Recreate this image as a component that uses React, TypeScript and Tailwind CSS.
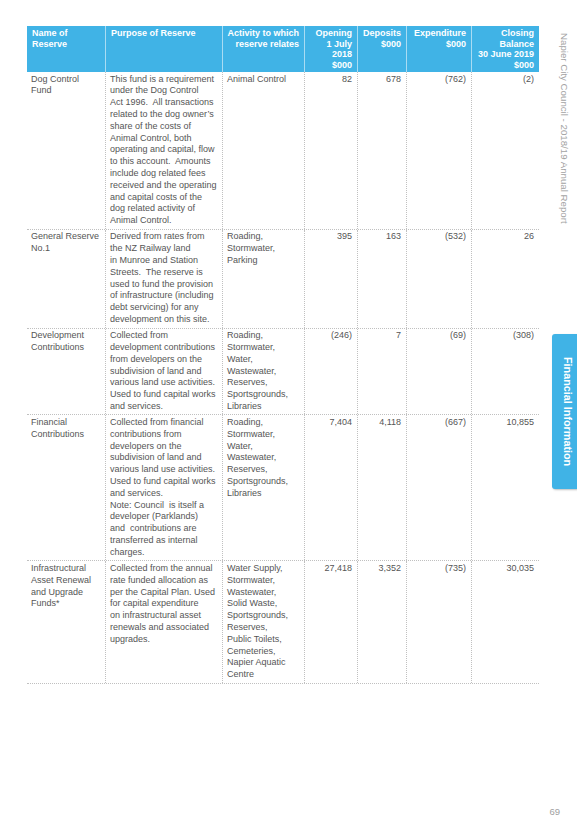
import React from "react";

type Row = {
  name: string[];
  purpose: string[];
  activity: string[];
  nums: [string, string, string, string];
};

const ACT7 = ["Roading,", "Stormwater,", "Water,", "Wastewater,", "Reserves,", "Sportsgrounds,", "Libraries"];

const rows: Row[] = [
  {
    name: ["Dog Control", "Fund"],
    purpose: [
      "This fund is a requirement",
      "under the Dog Control",
      "Act 1996.  All transactions",
      "related to the dog owner\u2019s",
      "share of the costs of",
      "Animal Control, both",
      "operating and capital, flow",
      "to this account.  Amounts",
      "include dog related fees",
      "received and the operating",
      "and capital costs of the",
      "dog related activity of",
      "Animal Control.",
    ],
    activity: ["Animal Control"],
    nums: ["82", "678", "(762)", "(2)"],
  },
  {
    name: ["General Reserve", "No.1"],
    purpose: [
      "Derived from rates from",
      "the NZ Railway land",
      "in Munroe and Station",
      "Streets.  The reserve is",
      "used to fund the provision",
      "of infrastructure (including",
      "debt servicing) for any",
      "development on this site.",
    ],
    activity: ["Roading,", "Stormwater,", "Parking"],
    nums: ["395", "163", "(532)", "26"],
  },
  {
    name: ["Development", "Contributions"],
    purpose: [
      "Collected from",
      "development contributions",
      "from developers on the",
      "subdivision of land and",
      "various land use activities.",
      "Used to fund capital works",
      "and services.",
    ],
    activity: ACT7,
    nums: ["(246)", "7", "(69)", "(308)"],
  },
  {
    name: ["Financial", "Contributions"],
    purpose: [
      "Collected from financial",
      "contributions from",
      "developers on the",
      "subdivision of land and",
      "various land use activities.",
      "Used to fund capital works",
      "and services.",
      "Note: Council  is itself a",
      "developer (Parklands)",
      "and  contributions are",
      "transferred as internal",
      "charges.",
    ],
    activity: ACT7,
    nums: ["7,404", "4,118", "(667)", "10,855"],
  },
  {
    name: ["Infrastructural", "Asset Renewal", "and Upgrade", "Funds*"],
    purpose: [
      "Collected from the annual",
      "rate funded allocation as",
      "per the Capital Plan. Used",
      "for capital expenditure",
      "on infrastructural asset",
      "renewals and associated",
      "upgrades.",
    ],
    activity: [
      "Water Supply,",
      "Stormwater,",
      "Wastewater,",
      "Solid Waste,",
      "Sportsgrounds,",
      "Reserves,",
      "Public Toilets,",
      "Cemeteries,",
      "Napier Aquatic",
      "Centre",
    ],
    nums: ["27,418", "3,352", "(735)", "30,035"],
  },
];

const headers: { lines: string[]; right: boolean }[] = [
  { lines: ["Name of", "Reserve"], right: false },
  { lines: ["Purpose of Reserve"], right: false },
  { lines: ["Activity to which", "reserve relates"], right: true },
  { lines: ["Opening", "1 July", "2018", "$000"], right: true },
  { lines: ["Deposits", "$000"], right: true },
  { lines: ["Expenditure", "$000"], right: true },
  { lines: ["Closing", "Balance", "30 June 2019", "$000"], right: true },
];

const GRID = "grid grid-cols-[78px_117px_82px_53px_49px_65px_68px]";

function Lines({ lines }: { lines: string[] }) {
  return (
    <>
      {lines.map((l, i) => (
        <div key={i} className="whitespace-pre">
          {l}
        </div>
      ))}
    </>
  );
}

export default function App() {
  return (
    <div className="w-[577px] h-[823px] bg-white flex overflow-hidden font-['Liberation_Sans',Arial,sans-serif]">
      {/* main table area */}
      <div className="w-[539px] pl-[27px] pt-[26px] shrink-0">
        <div className="w-[512px]">
          {/* header */}
          <div className={`${GRID} h-[46px] bg-[#40b3e6] text-white font-bold text-[9px] leading-[10.6px]`}>
            {headers.map((h, i) => (
              <div
                key={i}
                className={`pt-[2px] ${i > 0 ? "border-l border-[#a9dcf3]" : ""} ${
                  h.right ? "text-right pr-[5px] pl-[3px]" : "text-left pl-[5px]"
                }`}
              >
                <Lines lines={h.lines} />
              </div>
            ))}
          </div>
          {/* body */}
          {rows.map((r, ri) => (
            <div
              key={ri}
              className={`${GRID} border-b border-dotted border-[#c0c0c0] text-[9px] leading-[11.8px] text-[#555555]`}
            >
              <div className="pl-[4px] pt-[1.6px] pb-[1.8px]">
                <Lines lines={r.name} />
              </div>
              <div className="pl-[4px] pt-[1.6px] pb-[1.8px] border-l border-dotted border-[#c0c0c0]">
                <Lines lines={r.purpose} />
              </div>
              <div className="pl-[4px] pt-[1.6px] pb-[1.8px] border-l border-dotted border-[#c0c0c0]">
                <Lines lines={r.activity} />
              </div>
              {r.nums.map((n, ni) => (
                <div
                  key={ni}
                  className="text-right pr-[5px] pt-[1.6px] pb-[1.8px] border-l border-dotted border-[#c0c0c0]"
                >
                  {n}
                </div>
              ))}
            </div>
          ))}
        </div>
      </div>

      {/* right margin */}
      <div className="w-[38px] shrink-0 flex flex-col pt-[33px]">
        <div className="h-[301px]">
          <div className="ml-[20px] [writing-mode:vertical-rl] whitespace-nowrap text-[9.7px] leading-[10px] text-[#a3a3a3]">
            Napier City Council - 2018/19 Annual Report
          </div>
        </div>
        <div className="ml-[13px] w-[25px] h-[155px] bg-[#40b3e6] rounded-l-[3px] flex items-center pl-[10px] shadow-[1px_1px_2px_rgba(0,0,0,0.25)]">
          <div className="[writing-mode:vertical-rl] whitespace-nowrap text-white font-bold text-[10.8px] leading-[12px]">
            Financial Information
          </div>
        </div>
        <div className="flex-1" />
        <div className="text-right pr-[17px] pb-[6px] text-[9.5px] leading-[11px] text-[#a0a0a0]">69</div>
      </div>
    </div>
  );
}
